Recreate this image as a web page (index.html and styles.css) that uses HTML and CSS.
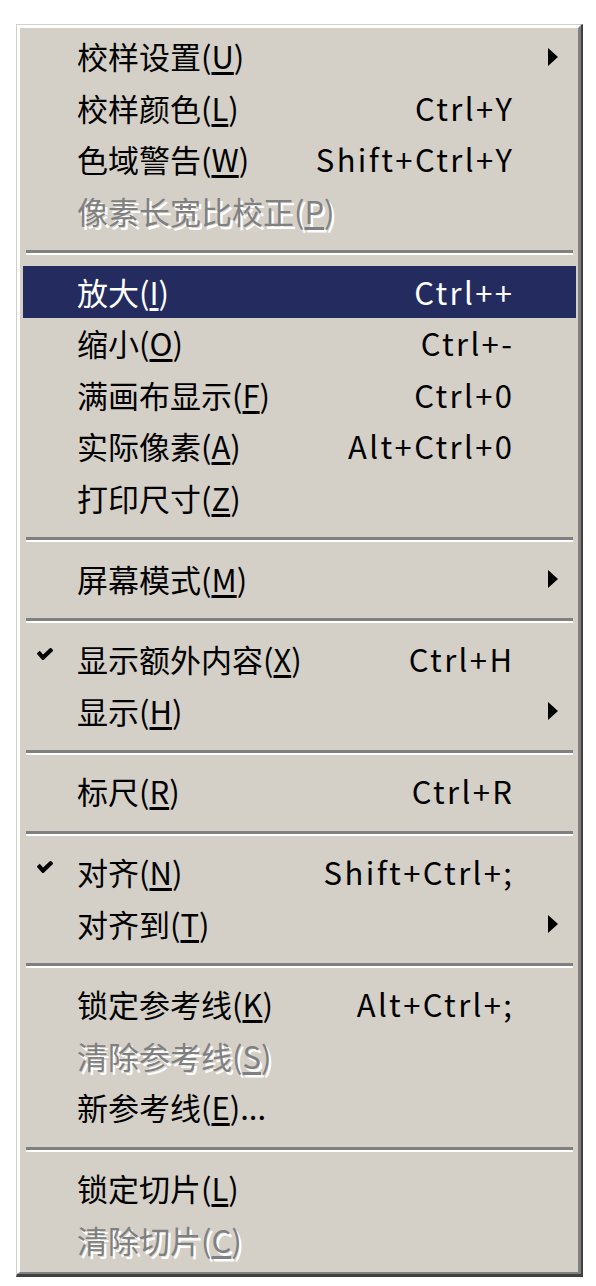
FILE: index.html
```
<!DOCTYPE html>
<html lang="zh-CN">
<head>
<meta charset="utf-8">
<title>视图菜单</title>
<link rel="stylesheet" href="styles.css">
</head>
<body>
<div class="menu">
  <div class="menu-inner">
    <div class="item"><span class="check"></span><span class="label">校样设置(<u>U</u>)</span><span class="key"></span><span class="sub"><svg class="arrow" viewBox="0 0 10 18" width="10" height="18"><polygon points="0,0 10,9 0,18"/></svg></span></div>
    <div class="item"><span class="check"></span><span class="label">校样颜色(<u>L</u>)</span><span class="key">Ctrl+Y</span><span class="sub"></span></div>
    <div class="item"><span class="check"></span><span class="label">色域警告(<u>W</u>)</span><span class="key">Shift+Ctrl+Y</span><span class="sub"></span></div>
    <div class="item disabled"><span class="check"></span><span class="label">像素长宽比校正(<u>P</u>)</span><span class="key"></span><span class="sub"></span></div>
    <div class="sep"></div>
    <div class="item active"><span class="check"></span><span class="label">放大(<u>I</u>)</span><span class="key">Ctrl++</span><span class="sub"></span></div>
    <div class="item"><span class="check"></span><span class="label">缩小(<u>O</u>)</span><span class="key">Ctrl+-</span><span class="sub"></span></div>
    <div class="item"><span class="check"></span><span class="label">满画布显示(<u>F</u>)</span><span class="key">Ctrl+0</span><span class="sub"></span></div>
    <div class="item"><span class="check"></span><span class="label">实际像素(<u>A</u>)</span><span class="key">Alt+Ctrl+0</span><span class="sub"></span></div>
    <div class="item"><span class="check"></span><span class="label">打印尺寸(<u>Z</u>)</span><span class="key"></span><span class="sub"></span></div>
    <div class="sep"></div>
    <div class="item"><span class="check"></span><span class="label">屏幕模式(<u>M</u>)</span><span class="key"></span><span class="sub"><svg class="arrow" viewBox="0 0 10 18" width="10" height="18"><polygon points="0,0 10,9 0,18"/></svg></span></div>
    <div class="sep"></div>
    <div class="item"><span class="check"><svg class="tick" viewBox="0 0 16 12" width="16" height="12"><path d="M1.2 4.2 L6 9.6 L15 1"/></svg></span><span class="label">显示额外内容(<u>X</u>)</span><span class="key">Ctrl+H</span><span class="sub"></span></div>
    <div class="item"><span class="check"></span><span class="label">显示(<u>H</u>)</span><span class="key"></span><span class="sub"><svg class="arrow" viewBox="0 0 10 18" width="10" height="18"><polygon points="0,0 10,9 0,18"/></svg></span></div>
    <div class="sep"></div>
    <div class="item"><span class="check"></span><span class="label">标尺(<u>R</u>)</span><span class="key">Ctrl+R</span><span class="sub"></span></div>
    <div class="sep"></div>
    <div class="item"><span class="check"><svg class="tick" viewBox="0 0 16 12" width="16" height="12"><path d="M1.2 4.2 L6 9.6 L15 1"/></svg></span><span class="label">对齐(<u>N</u>)</span><span class="key">Shift+Ctrl+;</span><span class="sub"></span></div>
    <div class="item"><span class="check"></span><span class="label">对齐到(<u>T</u>)</span><span class="key"></span><span class="sub"><svg class="arrow" viewBox="0 0 10 18" width="10" height="18"><polygon points="0,0 10,9 0,18"/></svg></span></div>
    <div class="sep"></div>
    <div class="item"><span class="check"></span><span class="label">锁定参考线(<u>K</u>)</span><span class="key">Alt+Ctrl+;</span><span class="sub"></span></div>
    <div class="item disabled"><span class="check"></span><span class="label">清除参考线(<u>S</u>)</span><span class="key"></span><span class="sub"></span></div>
    <div class="item"><span class="check"></span><span class="label">新参考线(<u>E</u>)...</span><span class="key"></span><span class="sub"></span></div>
    <div class="sep"></div>
    <div class="item"><span class="check"></span><span class="label">锁定切片(<u>L</u>)</span><span class="key"></span><span class="sub"></span></div>
    <div class="item disabled"><span class="check"></span><span class="label">清除切片(<u>C</u>)</span><span class="key"></span><span class="sub"></span></div>
  </div>
</div>
</body>
</html>
```
FILE: styles.css
```
html, body {
  margin: 0;
  padding: 0;
  background: #ffffff;
}

body {
  font-family: "Noto Sans CJK SC", "Noto Sans", sans-serif;
  font-size: 31px;
  color: #000000;
}

.menu {
  box-sizing: border-box;
  width: 567px;
  margin: 24px 0 0 16px;
  background: #d4d0c8;
  border-style: solid;
  border-width: 1px 2px 3px 1px;
  border-color: #d4d0c8 #404040 #404040 #d4d0c8;
}

.menu-inner {
  border-style: solid;
  border-width: 3px 3px 2px 3px;
  border-color: #ffffff #808080 #808080 #ffffff;
  padding: 3px 2px 6px 3px;
  display: flex;
  flex-direction: column;
}

.item {
  height: 51.6px;
  display: grid;
  grid-template-columns: 54px 1fr auto 64px;
  align-items: center;
  line-height: 1;
  white-space: nowrap;
}

.label {
  padding-bottom: 2px;
}

.key {
  letter-spacing: 2.4px;
  margin-right: -2.4px;
  padding-bottom: 2px;
  text-align: right;
}

u {
  text-decoration-thickness: 2.5px;
  text-underline-offset: 3px;
}

.check {
  display: flex;
  align-items: center;
  height: 100%;
}

.tick {
  margin-left: 14px;
  margin-top: -12px;
  fill: none;
  stroke: #000000;
  stroke-width: 4.2;
  stroke-linejoin: miter;
}

.sub {
  display: flex;
  align-items: center;
  height: 100%;
}

.arrow {
  margin-left: 36px;
  fill: #000000;
}

.item.active {
  background: #242b5f;
  color: #ffffff;
}

.item.disabled {
  color: #808080;
  text-shadow: 2.5px 2.5px 0 #ffffff;
}

.sep {
  height: 29px;
  box-sizing: border-box;
  padding: 13px 3px 0 3px;
}

.sep::before {
  content: "";
  display: block;
  border-top: 3px solid #808080;
  border-bottom: 2px solid #ffffff;
}
```
